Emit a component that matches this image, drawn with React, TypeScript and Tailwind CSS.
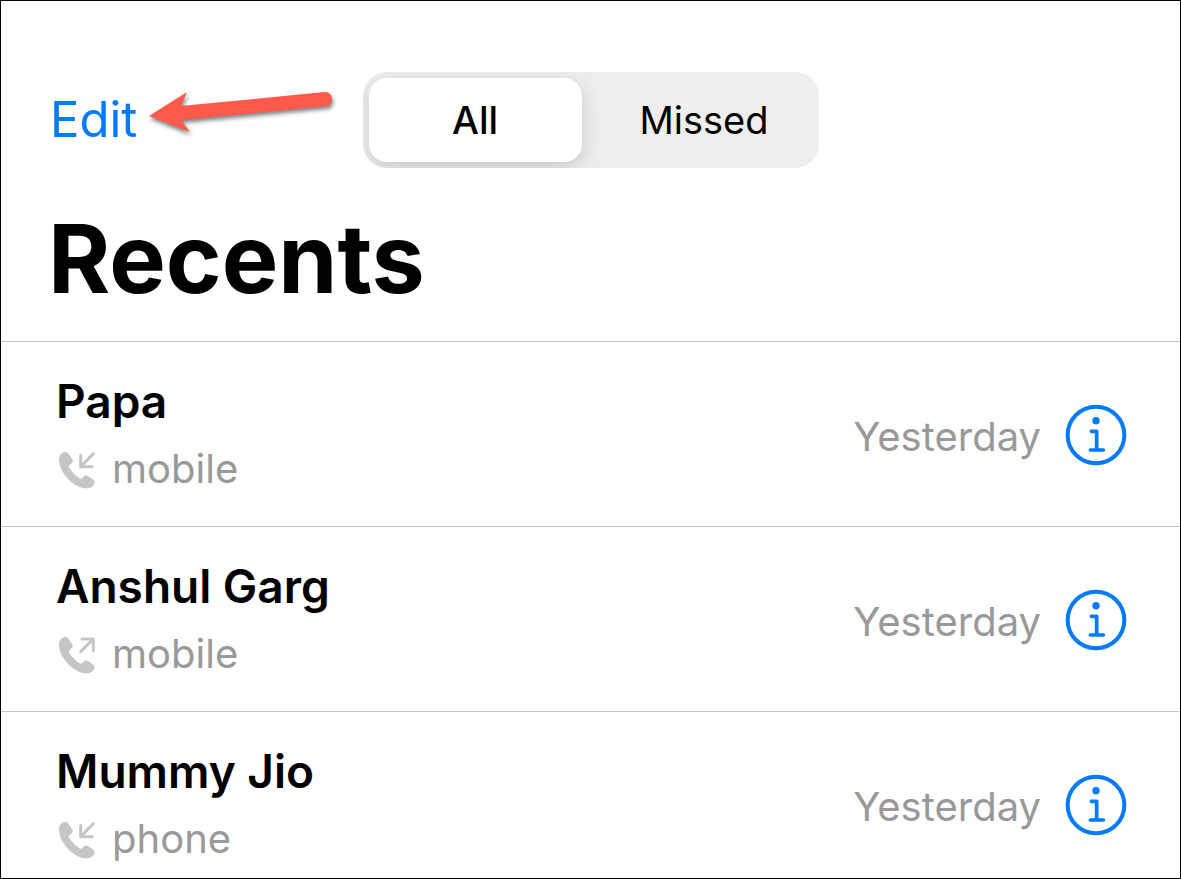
import React, { useState } from 'react';

type Direction = 'incoming' | 'outgoing';

interface Call {
  name: string;
  label: string;
  direction: Direction;
  when: string;
}

const CALLS: Call[] = [
  { name: 'Papa', label: 'mobile', direction: 'incoming', when: 'Yesterday' },
  { name: 'Anshul Garg', label: 'mobile', direction: 'outgoing', when: 'Yesterday' },
  { name: 'Mummy Jio', label: 'phone', direction: 'incoming', when: 'Yesterday' }
];

const TABS = ['All', 'Missed'];

const CallIcon: React.FC<{ direction: Direction }> = ({ direction }) => {
  return (
    <svg viewBox="18 29 120 120" className="w-10 h-10 shrink-0 text-[#c6c6c8]" role="img" aria-label={direction}>
      <path
        fill="currentColor"
        d="M41 39C33 41 27 50 27 61C27 100 72 147 111 147C122 147 130 141 133 133C135 127 132 123 127 119L115 111C110 107 105 108 101 112L96 117C94 119 91 119 88 117C78 110 64 96 58 86C56 83 57 80 59 78L65 72C69 68 70 64 66 59L56 44C52 38 47 37 41 39Z"
      />
      <path
        d={direction === 'incoming' ? 'M92 48V82H126M93 81L130 43' : 'M96 44H130V79M129 45L92 82'}
        fill="none"
        stroke="currentColor"
        strokeWidth="9"
        strokeLinecap="round"
        strokeLinejoin="round"
      />
    </svg>
  );
};

const InfoIcon: React.FC = () => {
  return (
    <svg viewBox="28 25 186 186" className="w-[62px] h-[62px]" fill="none" stroke="currentColor" aria-hidden="true">
      <circle cx="121" cy="118" r="85" strokeWidth="12" />
      <circle cx="121" cy="75" r="11" fill="currentColor" stroke="none" />
      <path d="M107 107H123V163M104 163H143" strokeWidth="11" strokeLinecap="round" strokeLinejoin="round" />
    </svg>
  );
};

const PointerArrow: React.FC = () => {
  return (
    <svg viewBox="0 0 196 56" className="w-[196px] h-14 shrink-0 drop-shadow-[1px_3px_2px_rgba(0,0,0,0.5)]" aria-hidden="true">
      <path
        fill="#ff594c"
        d="M6 24L44 0L38 14L182 0C186 0 189 3 189 7C189 11 187 14 183 14L38 28L47 40Z"
      />
    </svg>
  );
};

const CallRow: React.FC<{ call: Call }> = ({ call }) => {
  return (
    <li className="flex items-center justify-between gap-6 border-t border-[#c6c6c8] pt-[25px] pb-[23px] pl-[55px] pr-[53px]">
      <div className="min-w-0">
        <div className="truncate text-[46px] leading-[68px] font-semibold text-black">{call.name}</div>
        <div className="flex items-center gap-4 text-[40px] leading-[68px] text-[#999999]">
          <CallIcon direction={call.direction} />
          <span>{call.label}</span>
        </div>
      </div>
      <div className="flex items-center gap-6 shrink-0">
        <span className="pt-1 text-[40px] leading-[68px] text-[#999999]">{call.when}</span>
        <button type="button" aria-label={`Info for ${call.name}`} className="text-[#007aff]">
          <InfoIcon />
        </button>
      </div>
    </li>
  );
};

export default function App() {
  const [tab, setTab] = useState('All');

  return (
    <div className="h-screen overflow-hidden border border-black bg-white font-['Inter',sans-serif]">
      <header className="pt-[71px] pb-[23px]">
        <div className="grid grid-cols-[1fr_456px_1fr] items-center">
          <div className="flex items-center gap-1.5 pl-[49px]">
            <button type="button" className="text-[49px] leading-[60px] text-[#007aff]">Edit</button>
            <PointerArrow />
          </div>
          <div className="grid h-24 grid-cols-[213fr_217fr] gap-3.5 overflow-hidden rounded-3xl bg-[#eeeeee] p-1.5">
            {TABS.map((t) => (
              <button
                key={t}
                type="button"
                aria-pressed={tab === t}
                onClick={() => setTab(t)}
                className={`rounded-[18px] text-[38px] leading-[48px] text-black ${
                  tab === t ? 'bg-white font-medium shadow-[0_6px_20px_rgba(0,0,0,0.16)]' : ''
                }`}
              >
                {t}
              </button>
            ))}
          </div>
        </div>
        <h1 className="mt-8 pl-[47px] text-[95px] leading-[118px] font-bold text-black">Recents</h1>
      </header>

      <ul>
        {CALLS.map((call) => (
          <CallRow key={call.name} call={call} />
        ))}
      </ul>
    </div>
  );
}
